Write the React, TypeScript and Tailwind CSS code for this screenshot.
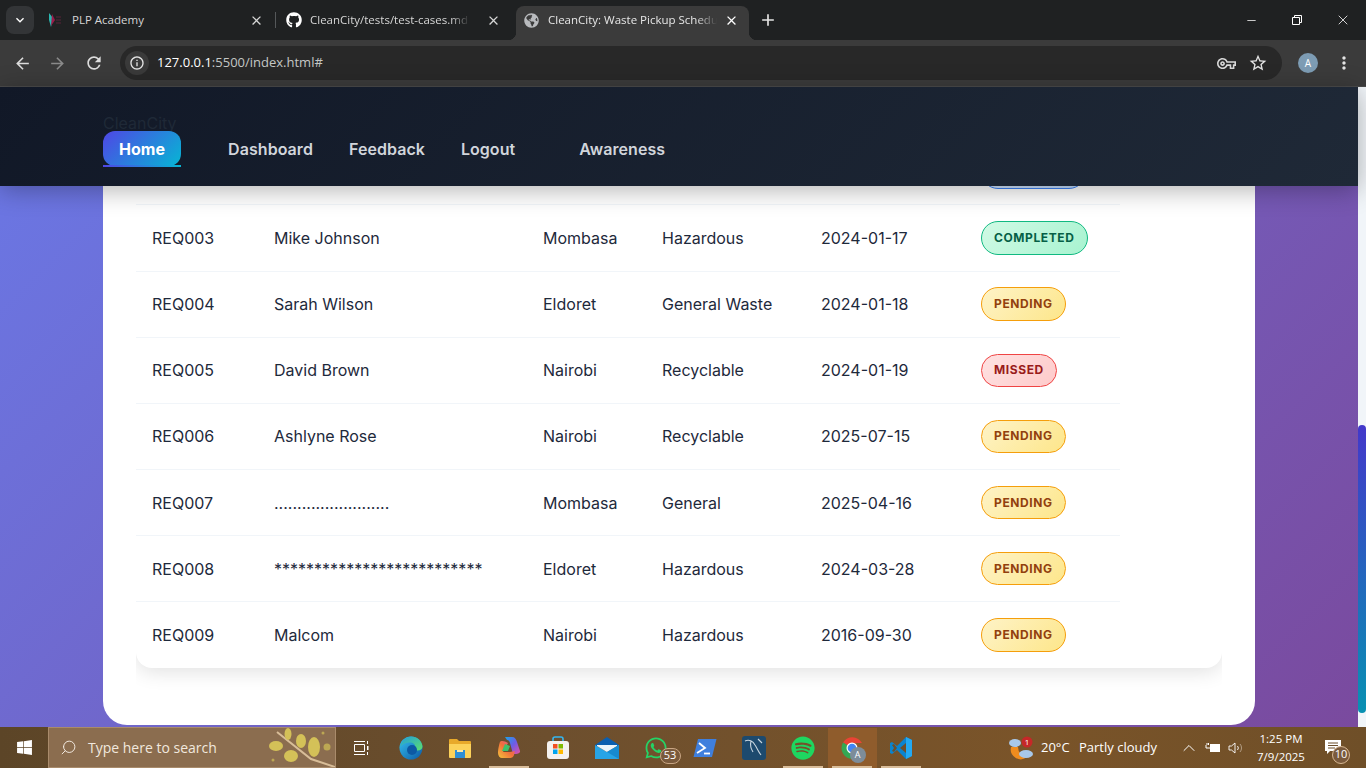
import { FaGithub, FaGlobeAmericas, FaWhatsapp, FaSpotify, FaWindows } from 'react-icons/fa';
import { MdArrowBack, MdArrowForward, MdRefresh, MdInfoOutline, MdOutlineVpnKey, MdStarBorder, MdMoreVert, MdKeyboardArrowDown, MdClose, MdAdd } from 'react-icons/md';
import { Search, Minus, X, ChevronUp } from 'lucide-react';

type Status = 'pending' | 'completed' | 'missed' | 'scheduled';

const rows: { id: string; name: string; city: string; type: string; date: string; status: Status }[] = [
  { id: 'REQ002', name: 'Jane Smith', city: 'Kisumu', type: 'Recyclable', date: '2024-01-16', status: 'scheduled' },
  { id: 'REQ003', name: 'Mike Johnson', city: 'Mombasa', type: 'Hazardous', date: '2024-01-17', status: 'completed' },
  { id: 'REQ004', name: 'Sarah Wilson', city: 'Eldoret', type: 'General Waste', date: '2024-01-18', status: 'pending' },
  { id: 'REQ005', name: 'David Brown', city: 'Nairobi', type: 'Recyclable', date: '2024-01-19', status: 'missed' },
  { id: 'REQ006', name: 'Ashlyne Rose', city: 'Nairobi', type: 'Recyclable', date: '2025-07-15', status: 'pending' },
  { id: 'REQ007', name: '.........................', city: 'Mombasa', type: 'General', date: '2025-04-16', status: 'pending' },
  { id: 'REQ008', name: '**************************', city: 'Eldoret', type: 'Hazardous', date: '2024-03-28', status: 'pending' },
  { id: 'REQ009', name: 'Malcom', city: 'Nairobi', type: 'Hazardous', date: '2016-09-30', status: 'pending' },
];

const Badge = ({ status }: { status: Status }) => {
  const styles: Record<Status, string> = {
    pending: 'bg-[linear-gradient(135deg,#fef3c7,#fde68a)] border-[#f59e0b] text-[#92400e]',
    completed: 'bg-[linear-gradient(135deg,#d1fae5,#a7f3d0)] border-[#10b981] text-[#065f46]',
    missed: 'bg-[linear-gradient(135deg,#fee2e2,#fecaca)] border-[#ef4444] text-[#991b1b]',
    scheduled: 'bg-[linear-gradient(135deg,#dbeafe,#bfdbfe)] border-[#3b82f6] text-[#1e40af]',
  };
  return (
    <span className={`inline-flex h-[33.5px] items-center rounded-full border px-3 text-xs font-bold uppercase tracking-[0.6px] ${styles[status]}`}>
      {status}
    </span>
  );
};

const TabStrip = () => (
  <div className="flex h-10 items-start bg-[#1f2122] pl-[6px] pt-[6px] font-['Open_Sans',sans-serif] text-[11.5px] text-[#d6d6d6]">
    <div className="flex h-[28px] w-[28px] shrink-0 items-center justify-center rounded-lg bg-[#333537] text-white">
      <MdKeyboardArrowDown size={16} />
    </div>
    <div className="ml-[14px] flex h-[28px] w-[216px] shrink-0 items-center">
      <svg width="14" height="16" viewBox="0 0 14 16" className="shrink-0">
        <path d="M1 1 L5 6 L3 15 L1 8 Z" fill="#2ab7b0" />
        <path d="M4 2 L7 8 L3 14 Z" fill="#9b1b4b" />
        <path d="M8 5h5M8 8h5M8 11h5" stroke="#5a2338" strokeWidth="1" />
      </svg>
      <span className="ml-[10px] flex-1">PLP Academy</span>
      <MdClose size={15} />
    </div>
    <div className="ml-[11px] mt-[6px] h-4 w-px shrink-0 bg-[#55585a]" />
    <div className="ml-[10px] flex h-[28px] w-[216px] shrink-0 items-center">
      <FaGithub size={16} className="shrink-0 text-white" />
      <span className="ml-[8px] w-[160px] shrink-0 overflow-hidden whitespace-nowrap [mask-image:linear-gradient(90deg,#000_88%,transparent)]">CleanCity/tests/test-cases.md at main</span>
      <MdClose size={15} className="ml-[16px] shrink-0" />
    </div>
    <div className="relative ml-[14px] flex h-[34px] w-[233px] shrink-0 items-center rounded-t-lg bg-[#3b3b3b] pb-[6px] pl-[8px] text-[#e6e6e6]">
      <span className="absolute bottom-0 left-[-8px] size-2 bg-[radial-gradient(circle_at_0_0,transparent_8px,#3b3b3b_8.5px)]" />
      <span className="absolute bottom-0 right-[-8px] size-2 bg-[radial-gradient(circle_at_100%_0,transparent_8px,#3b3b3b_8.5px)]" />
      <FaGlobeAmericas size={15} className="shrink-0 text-[#b9bbbe]" />
      <span className="ml-[9px] w-[169px] shrink-0 overflow-hidden whitespace-nowrap [mask-image:linear-gradient(90deg,#000_88%,transparent)]">CleanCity: Waste Pickup Scheduler</span>
      <MdClose size={15} className="ml-[7px] shrink-0 text-white" />
    </div>
    <MdAdd size={20} className="ml-[9px] mt-[4px] shrink-0 text-[#e4e4e4]" />
    <div className="ml-auto flex h-7 items-center text-white">
      <Minus size={13} strokeWidth={1.4} className="mr-[33px]" />
      <svg width="12" height="12" viewBox="0 0 12 12" fill="none" stroke="currentColor" className="mr-[32px]">
        <path d="M1.5 3.5h7v7h-7zM3.5 3.5v-2h7v7h-2" />
      </svg>
      <X size={16} strokeWidth={1.2} className="mr-[15px]" />
    </div>
  </div>
);

const Toolbar = () => (
  <div className="flex h-[47px] items-center border-b border-[#4b4b4b] bg-[#3b3b3b] pl-[13px]">
    <MdArrowBack size={19} className="text-[#dcdcdc]" />
    <MdArrowForward size={19} className="ml-[16px] text-[#8a8a8a]" />
    <MdRefresh size={20} className="ml-[17px] text-[#dcdcdc]" />
    <div className="ml-[16px] flex h-[34px] w-[1162px] items-center rounded-full bg-[#282828] pl-[5px] font-['Open_Sans',sans-serif] text-[13px]">
      <div className="flex size-[24px] items-center justify-center rounded-full bg-[#3a3a3a]">
        <MdInfoOutline size={16} className="text-[#e4e4e4]" />
      </div>
      <span className="ml-[8px] text-white">127.0.0.1</span>
      <span className="text-[#c4c7c5]">:5500/index.html#</span>
      <MdOutlineVpnKey size={19} className="ml-auto text-[#d8d8d8]" />
      <MdStarBorder size={20} className="ml-[12px] mr-[14px] text-[#e4e4e4]" />
    </div>
    <div className="ml-[16px] flex size-[20px] items-center justify-center rounded-full bg-[#7d9cb4] font-['Open_Sans',sans-serif] text-[10px] text-white">A</div>
    <MdMoreVert size={20} className="ml-[16px] text-[#e4e4e4]" />
  </div>
);

const Header = () => (
  <header className="relative z-10 h-[99px] shrink-0 bg-[linear-gradient(135deg,#111827,#1f2937)] pl-[103px] pt-[26px] shadow-[0_4px_24px_rgba(0,0,0,0.3)]">
    <div className="h-[18px] text-base leading-5 text-[#1f2937]">CleanCity</div>
    <nav className="flex items-center text-base font-semibold tracking-[0.05px] text-[#d1d5db]">
      <a className="relative flex h-[35px] items-center rounded-xl bg-[linear-gradient(135deg,#4f46e5,#06b6d4)] px-4 font-bold text-white">
        Home
        <span className="absolute inset-x-0 bottom-[-1px] h-[2px] bg-[linear-gradient(90deg,#4f46e5,#06b6d4)]" />
      </a>
      <a className="ml-[31px] px-4">Dashboard</a>
      <a className="ml-1 px-4">Feedback</a>
      <a className="ml-1 px-4">Logout</a>
      <a className="ml-8 px-4">Awareness</a>
    </nav>
  </header>
);

const Table = () => (
  <div className="mx-[33px] overflow-hidden pb-[40px]">
    <div className="rounded-b-2xl bg-white shadow-[0_4px_20px_rgba(0,0,0,0.12)]">
      <div className="w-[984px] text-base text-[#1e293b]">
        {rows.map((r, i) => (
          <div
            key={r.id}
            className={`grid grid-cols-[122px_269px_119px_159px_160px_155px] items-center ${i < rows.length - 1 ? 'h-[66.17px] border-b border-[#f1f5f9]' : 'h-[65.7px]'}`}
          >
            <div className="pl-4">{r.id}</div>
            <div className="pl-4">{r.name}</div>
            <div className="pl-4">{r.city}</div>
            <div className="pl-4">{r.type}</div>
            <div className="pl-4">{r.date}</div>
            <div className="flex items-center pl-4"><Badge status={r.status} /></div>
          </div>
        ))}
      </div>
    </div>
  </div>
);

const Page = () => (
  <div className="flex min-h-0 flex-1 bg-[#f1f5f9]">
    <div className="flex min-w-0 flex-1 flex-col bg-[linear-gradient(135deg,#6a78e6,#7a4a9e)]">
      <Header />
      <main className="flex min-h-0 flex-1 flex-col justify-end overflow-hidden pb-[2px] pl-[103px] pr-[103px]">
        <div className="rounded-b-3xl bg-white pb-[17px]">
          <Table />
        </div>
      </main>
    </div>
    <div className="w-2 shrink-0 pt-[338px]">
      <div className="h-[288px] rounded-full bg-[linear-gradient(180deg,#4338ca,#0891b2)]" />
    </div>
  </div>
);

const EdgeIcon = () => (
  <svg width="24" height="24" viewBox="0 0 24 24">
    <defs>
      <linearGradient id="edgeA" x1="0" y1="0" x2="1" y2="1"><stop offset="0" stopColor="#35c1f1" /><stop offset="1" stopColor="#0c59a4" /></linearGradient>
      <linearGradient id="edgeB" x1="0" y1="0" x2="1" y2="1"><stop offset="0" stopColor="#1f9ce0" /><stop offset="1" stopColor="#5ee06a" /></linearGradient>
    </defs>
    <circle cx="12" cy="12" r="11.5" fill="url(#edgeA)" />
    <path d="M1 12C2 4 8 .5 12 .5c6 0 11 4 11.5 10 0 3-3 4.5-6 4-2-.4-2-1.500-1.500-3 .8-3-2-5-5-5-4 0-9 2-10.500 5.500z" fill="url(#edgeB)" />
    <circle cx="13" cy="14" r="5" fill="#0c59a4" />
  </svg>
);

const ExplorerIcon = () => (
  <svg width="24" height="22" viewBox="0 0 24 22">
    <path d="M1 3a1 1 0 011-1h7l2 2h11a1 1 0 011 1v3H1z" fill="#e8a92a" />
    <path d="M1 7h22v13a1 1 0 01-1 1H2a1 1 0 01-1-1z" fill="#fcd25a" />
    <path d="M7 13h10v8H7z" fill="#2d8fd6" />
    <path d="M9 13h6v2H9z" fill="#fbe9a6" />
  </svg>
);

const CopilotIcon = () => (
  <svg width="24" height="24" viewBox="0 0 24 24">
    <defs>
      <linearGradient id="copA" x1="0" y1="0" x2="1" y2="1"><stop offset="0" stopColor="#1aa6e8" /><stop offset="0.5" stopColor="#6c5ce7" /><stop offset="1" stopColor="#e84fa0" /></linearGradient>
      <linearGradient id="copB" x1="0" y1="1" x2="1" y2="0"><stop offset="0" stopColor="#f5c33b" /><stop offset="0.5" stopColor="#f0703a" /><stop offset="1" stopColor="#e84fa0" /></linearGradient>
    </defs>
    <path d="M8 1h7c3 0 4 2 5 5l3 9c.5 2-2 3-4 3h-3l-3-11c-.5-2-1.500-3-3-3z" fill="url(#copA)" />
    <path d="M3 6c-.5 1-2 7-2 11 0 3 2 5 4 5h8c2 0 3.500-1 4-3l1-4-5 1H6l5-9c-3-2-7-3-8-1z" fill="url(#copB)" />
    <path d="M8 8l-3 7h6l2-5z" fill="#3fc06a" />
  </svg>
);

const StoreIcon = () => (
  <svg width="24" height="24" viewBox="0 0 24 24">
    <path d="M7 6V3a2 2 0 012-2h6a2 2 0 012 2v3" fill="none" stroke="#35b6f0" strokeWidth="1.600" />
    <rect x="1" y="5" width="22" height="18" rx="3" fill="#f4f1ee" />
    <rect x="7" y="8" width="4.500" height="4.500" fill="#f25022" />
    <rect x="12.500" y="8" width="4.500" height="4.500" fill="#7fba00" />
    <rect x="7" y="13.500" width="4.500" height="4.500" fill="#00a4ef" />
    <rect x="12.500" y="13.500" width="4.500" height="4.500" fill="#ffb900" />
  </svg>
);

const MailIcon = () => (
  <svg width="24" height="24" viewBox="0 0 24 24">
    <path d="M0 9l12-8 12 8v1H0z" fill="#0a5fb0" />
    <path d="M0 9l12 7 12-7v14H0z" fill="#27a4e6" />
    <path d="M2 9h20v1l-10 6-10-6z" fill="#eaf4fb" />
    <path d="M12 16l12-7v14z" fill="#178ad0" />
  </svg>
);

const PowerShellIcon = () => (
  <svg width="24" height="20" viewBox="0 0 24 20">
    <path d="M5 1h18.500L19 19H.5z" fill="#3f7fdd" />
    <path d="M6 5l6 5-8 5" fill="none" stroke="#fff" strokeWidth="1.800" />
    <path d="M11 15.500h6" stroke="#fff" strokeWidth="1.800" />
  </svg>
);

const MySqlIcon = () => (
  <svg width="24" height="24" viewBox="0 0 24 24">
    <rect width="24" height="24" rx="3" fill="#1d4a6e" />
    <path d="M3 5c4-2 8 0 10 4 2 3 3 6 6 10M9 5c-1 4 0 8 2 11M16 3l4 4" fill="none" stroke="#c8d6e0" strokeWidth="1.100" />
  </svg>
);

const ChromeIcon = () => (
  <svg width="24" height="24" viewBox="0 0 24 24">
    <path d="M12 12L3 6.500A11 11 0 0122 7H12z" fill="#ea4335" />
    <path d="M12 12H22A11 11 0 0112 23z" fill="#fbc02d" />
    <path d="M12 12L12 23A11 11 0 013 6.500z" fill="#34a853" />
    <circle cx="12" cy="12" r="5.500" fill="#fff" />
    <circle cx="12" cy="12" r="4.300" fill="#4285f4" />
  </svg>
);

const VsCodeIcon = () => (
  <svg width="24" height="24" viewBox="0 0 24 24">
    <path d="M17 1l6 3v16l-6 3-9-9-5 4-2-1V7l2-1 5 4z" fill="#0a84d0" />
    <path d="M17 1l6 3v16l-6 3z" fill="#23a9f2" />
    <path d="M17 7l-6 5 6 5z" fill="#6d4f2c" />
    <path d="M3 9l2-1 3 4-3 4-2-1 2-3z" fill="#6d4f2c" />
  </svg>
);

const WeatherIcon = () => (
  <svg width="24" height="24" viewBox="0 0 24 24" className="shrink-0">
    <path d="M2 11a10 10 0 0016 10 10 10 0 01-9-10z" fill="#f08c1e" />
    <ellipse cx="6" cy="7" rx="6" ry="4" fill="#a8c8ea" />
    <ellipse cx="17" cy="18" rx="7" ry="4" fill="#a8c8ea" />
    <circle cx="18" cy="6" r="5.500" fill="#c62828" />
    <text x="18" y="9" textAnchor="middle" fontSize="8" fill="#fff" fontFamily="Open Sans, sans-serif">1</text>
  </svg>
);

const Slot = ({ children, running, active }: { children: React.ReactNode; running?: boolean; active?: boolean }) => (
  <div className={`relative flex h-10 w-[49px] shrink-0 items-center justify-center ${active ? 'bg-[#8f5c2c]' : ''}`}>
    {children}
    {running && <span className="absolute bottom-0 left-[4px] right-[5px] h-[2px] bg-[#d9bd9a]" />}
  </div>
);

const Taskbar = () => (
  <div className="flex h-[41px] shrink-0 items-center bg-[linear-gradient(90deg,#5c4527,#6d4f2e_40%,#7a5429_75%,#6f4f28)] font-['Open_Sans',sans-serif] text-white">
    <div className="flex h-full w-[48px] shrink-0 items-center justify-center">
      <FaWindows size={17} />
    </div>
    <div className="relative flex h-full w-[288px] shrink-0 items-center border border-[#a98b6b] bg-[#8b6d4f] pl-[11px] text-[14px] text-[#f1e8de]">
      <Search size={17} strokeWidth={1.4} className="-scale-x-100" />
      <span className="ml-[11px]">Type here to search</span>
      <svg width="70" height="40" viewBox="0 0 70 40" className="absolute bottom-0 right-0">
        <path d="M12 5l34 27 24 8" stroke="#d8bd98" strokeWidth="2" fill="none" />
        <ellipse cx="11" cy="19" rx="7" ry="5" fill="#d4c158" />
        <ellipse cx="23" cy="7" rx="3.500" ry="6" fill="#d4c158" />
        <ellipse cx="36" cy="14" rx="5" ry="7" fill="#d4c158" />
        <ellipse cx="49" cy="20" rx="6" ry="10" fill="#d4c158" />
        <ellipse cx="26" cy="29" rx="7" ry="6" fill="#d4c158" />
        <circle cx="62" cy="20" r="3.500" fill="#bca753" />
        <circle cx="8" cy="33" r="1.500" fill="#bca753" />
        <circle cx="58" cy="6" r="1.500" fill="#bca753" />
      </svg>
    </div>
    <Slot>
      <svg width="16" height="16" viewBox="0 0 16 16" fill="none" stroke="#fff">
        <path d="M1.500 4.500h10v7h-10zM1 1.500h11M1 14.500h11M14.500 1v3M14.500 12v3" />
        <rect x="14" y="6" width="1.500" height="4" fill="#fff" stroke="none" />
      </svg>
    </Slot>
    <div className="ml-[1.5px] flex shrink-0">
      <Slot><EdgeIcon /></Slot>
      <Slot><ExplorerIcon /></Slot>
      <Slot running><CopilotIcon /></Slot>
      <Slot><StoreIcon /></Slot>
      <Slot><MailIcon /></Slot>
      <Slot>
        <FaWhatsapp size={24} className="text-[#25d366]" />
        <span className="absolute left-[28px] top-[20px] flex h-[16px] w-[21px] items-center justify-center rounded-full border border-[#c9a684] bg-[#7a5a3c] text-[11px] text-white">53</span>
      </Slot>
      <Slot><PowerShellIcon /></Slot>
      <Slot><MySqlIcon /></Slot>
      <Slot running><FaSpotify size={24} className="text-[#1ed760]" /></Slot>
      <Slot active running>
        <ChromeIcon />
        <span className="absolute left-[22px] top-[19px] flex size-[16px] items-center justify-center rounded-full bg-[#7d8c99] text-[9px] text-white">A</span>
      </Slot>
      <Slot running><VsCodeIcon /></Slot>
    </div>
    <div className="ml-[83.5px] flex items-center text-[13px]">
      <WeatherIcon />
      <span className="ml-2 w-[29px] whitespace-nowrap">20°C</span>
      <span className="ml-[9px] w-[79px] whitespace-nowrap">Partly cloudy</span>
    </div>
    <ChevronUp size={20} strokeWidth={1.2} className="ml-[21px] shrink-0" />
    <svg width="16" height="12" viewBox="0 0 16 12" className="ml-[6px] shrink-0">
      <path d="M5 2h10v8H5z" fill="#fff" />
      <path d="M1 3v3h4M2 1v2M3.500 1v2" stroke="#fff" fill="none" />
    </svg>
    <svg width="16" height="14" viewBox="0 0 16 14" fill="none" stroke="#fff" strokeWidth="0.900" className="ml-[7px] shrink-0">
      <path d="M1 5h2.500L7 2v10L3.500 9H1z" />
      <path d="M9.500 5a3 3 0 010 4" />
      <path d="M12 3a6 6 0 010 8" stroke="#b9a58d" />
    </svg>
    <div className="ml-px flex w-[72px] shrink-0 flex-col items-center text-[11.5px] leading-[18px]">
      <span>1:25 PM</span>
      <span>7/9/2025</span>
    </div>
    <div className="relative ml-[8px] shrink-0">
      <svg width="20" height="18" viewBox="0 0 20 18">
        <path d="M0 1h16v11H5l-3 3v-3H0z" fill="#fff" />
        <path d="M3 4h10M3 6.500h10M3 9h7" stroke="#6d4f2c" />
      </svg>
      <span className="absolute left-[7px] top-[7px] flex size-[18px] items-center justify-center rounded-full border border-[#d8b894] bg-[#7a5a3c] text-[11px]">10</span>
    </div>
  </div>
);

export default function App() {
  return (
    <div className="flex h-screen flex-col overflow-hidden font-['Inter',sans-serif]">
      <TabStrip />
      <Toolbar />
      <Page />
      <Taskbar />
    </div>
  );
}
